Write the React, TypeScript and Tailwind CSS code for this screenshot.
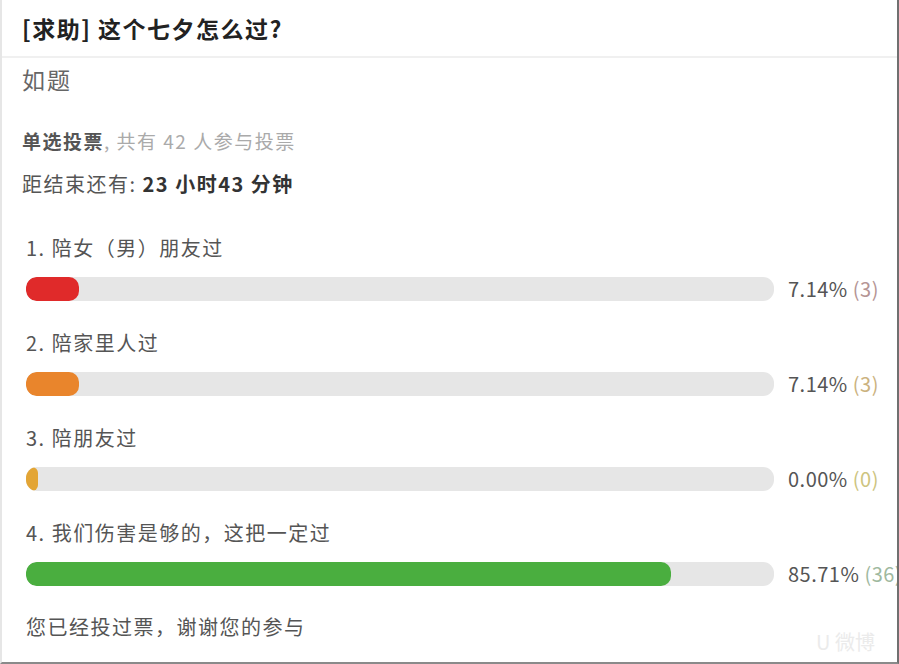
import React from "react";

const font = { fontFamily: '"Noto Sans CJK SC", "Noto Sans", sans-serif' };

type Opt = { label: string; fill: string; width: number; pct: string; count: string; countColor: string };

const options: Opt[] = [
  { label: "1. 陪女（男）朋友过", fill: "bg-[#e02a2a]", width: 53, pct: "7.14%", count: "(3)", countColor: "text-[#b59595]" },
  { label: "2. 陪家里人过", fill: "bg-[#e9852c]", width: 53, pct: "7.14%", count: "(3)", countColor: "text-[#cbb27e]" },
  { label: "3. 陪朋友过", fill: "bg-[#e3a535]", width: 12, pct: "0.00%", count: "(0)", countColor: "text-[#cdc47e]" },
  { label: "4. 我们伤害是够的，这把一定过", fill: "bg-[#4aae3f]", width: 645, pct: "85.71%", count: "(36)", countColor: "text-[#9fb99f]" },
];

export default function App() {
  return (
    <div
      className="relative w-[899px] h-[664px] overflow-hidden bg-white border-l-2 border-l-[#e6e6e6] border-r-2 border-r-[#707070] border-b-2 border-b-[#8a8a8a]"
      style={font}
    >
      <div className="h-[58px] pl-[20px] flex items-center border-b-2 border-[#f0f0f0]">
        <h1 className="text-[23px] font-bold text-[#222] leading-none tracking-[1.5px]">[求助] 这个七夕怎么过?</h1>
      </div>
      <div className="pl-[20px] pt-[6px] text-[23px] leading-[30px] text-[#666] tracking-[2px]">如题</div>
      <div className="pl-[20px] mt-[35px] text-[19px] leading-[24px] tracking-[1.5px]">
        <span className="font-bold text-[#555]">单选投票</span>
        <span className="text-[#aaa]">, 共有 42 人参与投票</span>
      </div>
      <div className="pl-[20px] mt-[19px] text-[20px] leading-[24px] text-[#555] tracking-[1.5px]">
        距结束还有: <span className="font-bold text-[#333]">23 小时43 分钟</span>
      </div>
      <div className="mt-[40px] flex flex-col gap-[30px]">
        {options.map((o, i) => (
          <div key={i} className="flex flex-col">
            <div className="pl-[24px] text-[20px] leading-[24px] text-[#555] whitespace-pre tracking-[1.5px]">{o.label}</div>
            <div className="mt-[17px] flex items-center">
              <div className="ml-[24px] w-[748px] h-[24px] rounded-[11px] bg-[#e6e6e6] overflow-hidden flex shrink-0">
                <div className={`${o.fill} h-full rounded-[10px]`} style={{ width: o.width }} />
              </div>
              <div className="ml-[14px] text-[20px] leading-[24px] text-[#555] whitespace-nowrap tracking-[0.5px]">
                {o.pct} <span className={o.countColor}>{o.count}</span>
              </div>
            </div>
          </div>
        ))}
      </div>
      <div className="pl-[24px] mt-[29px] text-[20px] leading-[24px] text-[#555] tracking-[1.5px]">您已经投过票，谢谢您的参与</div>
      <div className="absolute right-[22px] bottom-[10px] text-[20px] text-[#ebebeb] leading-none">U 微博</div>
    </div>
  );
}
